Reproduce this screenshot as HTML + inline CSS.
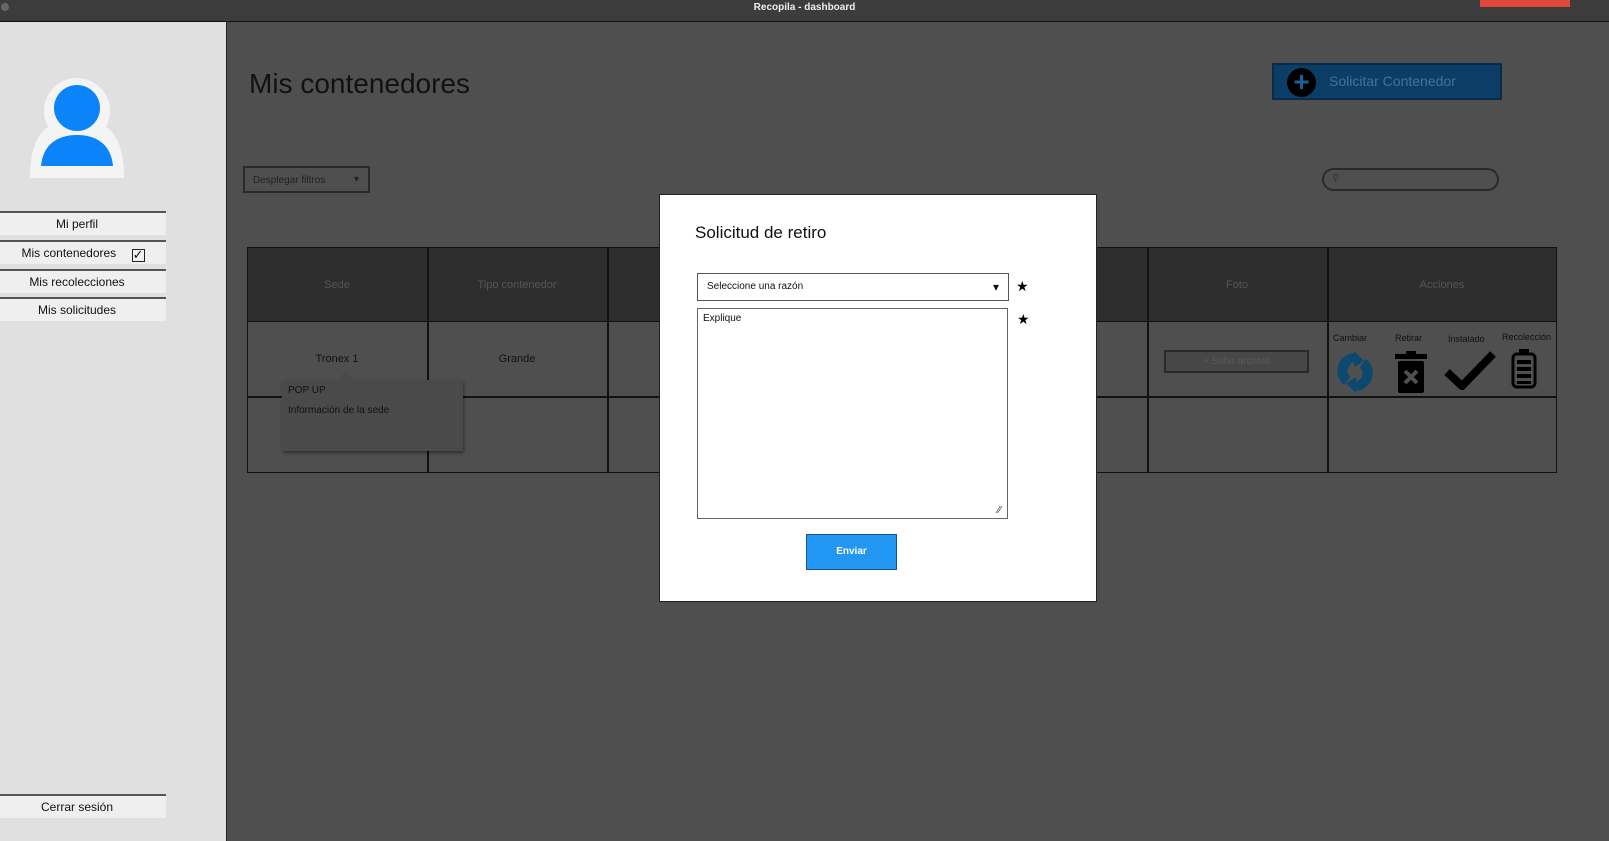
<!DOCTYPE html>
<html><head><meta charset="utf-8"><style>
*{box-sizing:border-box;margin:0;padding:0}
body{width:1609px;height:841px;overflow:hidden;background:#4f4f4f;font-family:"Liberation Sans",sans-serif;position:relative}
.a{position:absolute}
.side{left:0;top:22px;width:227px;height:819px;background:#e0e0e0;border-right:1.5px solid #222}
.mi{left:0;width:166px;height:24px;background:#efefef;border-top:2px solid #555;font-size:12px;text-align:center;line-height:22px;color:#111;padding-right:12px}
.c{position:absolute;display:flex;align-items:center;justify-content:center;font-size:11px}
</style></head><body>
<div class="a" style="left:0;top:0;width:1609px;height:22px;background:#3c3c3c;border-bottom:1px solid #111"></div>
<div class="a" style="left:1px;top:3px;width:8px;height:8px;border-radius:50%;background:#666"></div>
<div class="a" style="left:0;top:2px;width:1609px;text-align:center;color:#eee;font-size:10px;font-weight:bold">Recopila - dashboard</div>
<div class="a" style="left:1480px;top:0;width:90px;height:7px;background:#e0483a"></div>
<div class="a side"></div>
<svg class="a" style="left:30px;top:74px" width="94" height="104"><path d="M0 104 C0 62 15 45 47 45 C79 45 94 62 94 104Z" fill="#f4f4f4"/><circle cx="47" cy="37" r="33" fill="#f4f4f4"/><circle cx="47" cy="34" r="23" fill="#0a84f8"/><path d="M11 92 C13 70 28 61 47 61 C66 61 81 70 83 92Z" fill="#0a84f8"/></svg>
<div class="a mi" style="top:211px">Mi perfil</div>
<div class="a mi" style="top:240px;padding-right:0">Mis contenedores <span style="display:inline-block;width:13px;height:13px;border:1.5px solid #222;margin-left:12px;vertical-align:-2px;font-size:13px;line-height:9px">✓</span></div>
<div class="a mi" style="top:269px">Mis recolecciones</div>
<div class="a mi" style="top:297px">Mis solicitudes</div>
<div class="a mi" style="top:794px">Cerrar sesión</div>
<div class="a" style="left:249px;top:68px;font-size:28px;color:#111">Mis contenedores</div>
<div class="a" style="left:1272px;top:63px;width:230px;height:37px;background:#0c3d66;border:2px solid #0a2a48"></div>
<div class="a" style="left:1287px;top:68px;width:29px;height:29px;border-radius:50%;background:#000;color:#1c5f95;font-size:28px;line-height:28px;text-align:center;font-weight:bold">+</div>
<div class="a" style="left:1329px;top:73px;color:#41739b;font-size:14px">Solicitar Contenedor</div>
<div class="a" style="left:243px;top:166px;width:127px;height:27px;border:2px solid #2a2a2a;font-size:10px;padding:7px 8px;color:#222">Desplegar filtros<span style="position:absolute;right:9px;top:6px">▾</span></div>
<div class="a" style="left:1322px;top:168px;width:177px;height:23px;border:2px solid #2a2a2a;border-radius:12px;font-size:10px;padding:3px 8px;color:#333">⚲</div>
<div class="a" style="left:247px;top:247px;width:1310px;height:226px;border:1.5px solid #111"></div>
<div class="a" style="left:248px;top:248px;width:1308px;height:74px;background:#2e2e2e;border-bottom:1.5px solid #111"></div>
<div class="a" style="left:248px;top:396px;width:1308px;height:1.5px;background:#111"></div>
<div class="a" style="left:427px;top:247px;width:1.5px;height:226px;background:#111"></div>
<div class="a" style="left:607px;top:247px;width:1.5px;height:226px;background:#111"></div>
<div class="a" style="left:1147px;top:247px;width:1.5px;height:226px;background:#111"></div>
<div class="a" style="left:1327px;top:247px;width:1.5px;height:226px;background:#111"></div>
<div class="c" style="left:247px;top:247px;width:180px;height:75px;color:#555">Sede</div>
<div class="c" style="left:427px;top:247px;width:180px;height:75px;color:#555">Tipo contenedor</div>
<div class="c" style="left:1147px;top:247px;width:180px;height:75px;color:#555">Foto</div>
<div class="c" style="left:1327px;top:247px;width:230px;height:75px;color:#555">Acciones</div>
<div class="c" style="left:247px;top:322px;width:180px;height:74px;color:#111">Tronex 1</div>
<div class="c" style="left:427px;top:322px;width:180px;height:74px;color:#111">Grande</div>
<div class="a" style="left:1164px;top:350px;width:145px;height:23px;border:2px solid #2a2a2a;background:#474747;color:#5a5a5a;font-size:10px;text-align:center;line-height:19px">+ Subir archivo</div>
<div class="a" style="left:1333px;top:333px;font-size:9px;color:#111">Cambiar</div>
<div class="a" style="left:1395px;top:333px;font-size:9px;color:#111">Retirar</div>
<div class="a" style="left:1448px;top:334px;font-size:9px;color:#111">Instalado</div>
<div class="a" style="left:1502px;top:332px;font-size:9px;color:#111">Recolección</div>
<svg class="a" style="left:1336px;top:351px" width="38" height="42"><path d="M19 2 A18 18 0 0 0 8 34 L14 26 A9 9 0 0 1 19 11Z M19 40 A18 18 0 0 0 30 8 L24 16 A9 9 0 0 1 19 31Z" fill="#0b4a6e"/><path d="M18 0 L28 10 L18 16Z M20 42 L10 32 L20 26Z" fill="#0b4a6e"/></svg>
<svg class="a" style="left:1395px;top:351px" width="32" height="42"><rect x="0" y="3" width="32" height="5" fill="#000"/><rect x="11" y="0" width="10" height="4" fill="#000"/><rect x="3" y="10" width="26" height="32" rx="2" fill="#000"/><path d="M10 20 L22 32 M22 20 L10 32" stroke="#4f4f4f" stroke-width="4"/></svg>
<svg class="a" style="left:1444px;top:350px" width="52" height="40"><path d="M3 22 L18 36 L49 4" stroke="#000" stroke-width="8" fill="none"/></svg>
<svg class="a" style="left:1511px;top:349px" width="26" height="40"><rect x="2" y="5" width="22" height="33" rx="4" fill="none" stroke="#000" stroke-width="3"/><rect x="8" y="0" width="10" height="6" fill="#000"/><rect x="6" y="11" width="14" height="4" fill="#000"/><rect x="6" y="18" width="14" height="4" fill="#000"/><rect x="6" y="25" width="14" height="4" fill="#000"/><rect x="6" y="32" width="14" height="3" fill="#000"/></svg>
<div class="a" style="left:282px;top:380px;width:181px;height:71px;background:#4a4a4a;box-shadow:1px 2px 3px rgba(0,0,0,.4);font-size:10px;color:#111;padding:1px 6px;line-height:20px">POP UP<br>Información de la sede</div>
<div class="a" style="left:337px;top:371px;width:0;height:0;border:9px solid transparent;border-bottom-color:#4a4a4a;border-top:0"></div>
<div class="a" style="left:659px;top:194px;width:438px;height:408px;background:#fff;border:1.5px solid #222"></div>
<div class="a" style="left:695px;top:223px;font-size:17px;color:#111">Solicitud de retiro</div>
<div class="a" style="left:697px;top:273px;width:312px;height:28px;border:1.5px solid #555;font-size:10px;padding:7px 9px;color:#111">Seleccione una razón<span style="position:absolute;right:9px;top:6px;font-size:12px">▾</span></div>
<div class="a" style="left:1016px;top:278px;font-size:14px">★</div>
<div class="a" style="left:697px;top:308px;width:311px;height:211px;border:1.5px solid #666;font-size:10px;padding:4px 5px;color:#111">Explique<span style="position:absolute;right:6px;bottom:2px;font-size:10px;color:#333">⁄⁄</span></div>
<div class="a" style="left:1017px;top:311px;font-size:14px">★</div>
<div class="a" style="left:806px;top:534px;width:91px;height:36px;background:#2196f3;border:1.5px solid #17568a;color:#fff;font-size:10px;font-weight:bold;text-align:center;line-height:33px">Enviar</div>
</body></html>
